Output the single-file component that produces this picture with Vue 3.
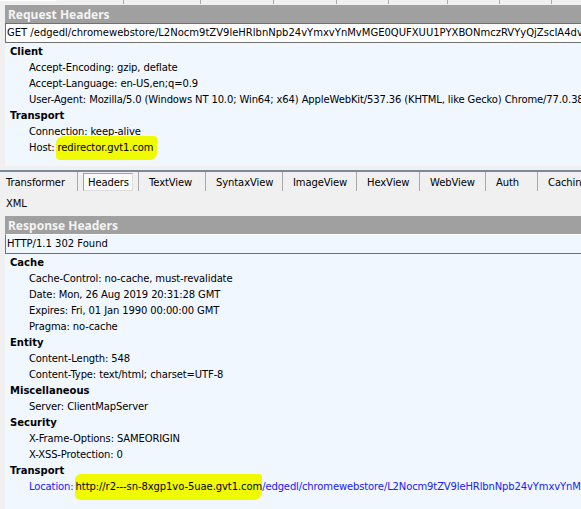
<script setup>
const topTabs = [57, 67, 77, 73, 63, 52, 59, 52, 52]

const tabs = [
  { name: 'Transformer', width: 78 },
  { name: 'Headers', width: 61 },
  { name: 'TextView', width: 67 },
  { name: 'SyntaxView', width: 77 },
  { name: 'ImageView', width: 74 },
  { name: 'HexView', width: 63 },
  { name: 'WebView', width: 66 },
  { name: 'Auth', width: 52 },
  { name: 'Caching', width: 60 }
]

const requestGroups = [
  {
    name: 'Client',
    rows: [
      'Accept-Encoding: gzip, deflate',
      'Accept-Language: en-US,en;q=0.9',
      'User-Agent: Mozilla/5.0 (Windows NT 10.0; Win64; x64) AppleWebKit/537.36 (KHTML, like Gecko) Chrome/77.0.38'
    ]
  },
  { name: 'Transport', rows: ['Connection: keep-alive'] }
]

const responseGroups = [
  {
    name: 'Cache',
    rows: [
      'Cache-Control: no-cache, must-revalidate',
      'Date: Mon, 26 Aug 2019 20:31:28 GMT',
      'Expires: Fri, 01 Jan 1990 00:00:00 GMT',
      'Pragma: no-cache'
    ]
  },
  { name: 'Entity', rows: ['Content-Length: 548', 'Content-Type: text/html; charset=UTF-8'] },
  { name: 'Miscellaneous', rows: ['Server: ClientMapServer'] },
  { name: 'Security', rows: ['X-Frame-Options: SAMEORIGIN', 'X-XSS-Protection: 0'] }
]
</script>

<template>
  <div class="inspector">
    <div class="top-tabs">
      <span v-for="(w, i) in topTabs" :key="i" class="top-tab" :style="{ width: w + 'px' }"></span>
    </div>

    <section class="pane pane--request">
      <h2 class="pane-title">Request Headers</h2>
      <div class="status-line">GET /edgedl/chromewebstore/L2Nocm9tZV9leHRlbnNpb24vYmxvYnMvMGE0QUFXUU1PYXBONmczRVYyQjZscIA4dv</div>
      <div class="tree">
        <template v-for="group in requestGroups" :key="group.name">
          <div class="group-name">{{ group.name }}</div>
          <div v-for="row in group.rows" :key="row" class="row">{{ row }}</div>
        </template>
        <div class="row">Host: <mark class="marker marker--host">redirector.gvt1.com</mark></div>
      </div>
    </section>

    <div class="splitter"></div>

    <nav class="tabs">
      <span
        v-for="tab in tabs"
        :key="tab.name"
        class="tab"
        :class="{ 'tab--active': tab.name === 'Headers' }"
        :style="{ width: tab.width + 'px' }"
      ><span class="tab-label">{{ tab.name }}</span></span>
    </nav>
    <nav class="tabs tabs--second">
      <span class="tab tab--xml">XML</span>
    </nav>

    <section class="pane pane--response">
      <h2 class="pane-title">Response Headers</h2>
      <div class="status-line">HTTP/1.1 302 Found</div>
      <div class="tree tree--response">
        <template v-for="group in responseGroups" :key="group.name">
          <div class="group-name">{{ group.name }}</div>
          <div v-for="row in group.rows" :key="row" class="row">{{ row }}</div>
        </template>
        <div class="group-name">Transport</div>
        <div class="row row--link">Location: <mark class="marker marker--location">http://r2---sn-8xgp1vo-5uae.gvt1.com</mark>/edgedl/chromewebstore/L2Nocm9tZV9leHRlbnNpb24vYmxvYnMvM</div>
      </div>
    </section>
  </div>
</template>

<style>
html,
body {
  margin: 0;
  background: #f0f0f0;
}
</style>

<style scoped>
.inspector {
  width: 581px;
  height: 509px;
  overflow: hidden;
  background: #f0f0f0;
  color: #000;
  font-family: "DejaVu Sans", sans-serif;
  font-size: 10px;
}

.top-tabs {
  display: flex;
  height: 5px;
}

.top-tab {
  flex: none;
  box-sizing: border-box;
  height: 4px;
  border-right: 1px solid #a8a8a8;
}

.top-tab:first-child {
  border-top: 1px solid #fff;
  border-right-color: transparent;
}

.pane {
  margin-left: 5px;
}

.pane-title {
  margin: 0;
  height: 18px;
  padding-left: 3px;
  background: #a0a0a0;
  color: #f4f4f4;
  font-family: "Noto Sans", sans-serif;
  font-size: 12px;
  font-weight: 700;
  line-height: 19px;
}

.status-line {
  box-sizing: border-box;
  height: 20px;
  padding-left: 1px;
  background: #fff;
  border-top: 1px solid #707070;
  border-bottom: 1px solid #707070;
  border-left: 1px solid #707070;
  line-height: 18px;
  white-space: nowrap;
  overflow: hidden;
}

.tree {
  box-sizing: border-box;
  height: 123px;
  padding-top: 1px;
  background: #f0f7ff;
}

.tree--response {
  height: 256px;
}

.pane--response .status-line {
  border-top-color: #fff;
  background: #f0f7ff;
}

.group-name,
.row {
  height: 16px;
  line-height: 16px;
  white-space: nowrap;
}

.group-name {
  padding-left: 5px;
  font-weight: 700;
}

.row {
  padding-left: 24px;
  letter-spacing: -0.13px;
}

.row--link {
  color: #2020f0;
}

.marker {
  display: inline-block;
  background: #f0fa00;
  color: inherit;
  vertical-align: top;
}

.marker--host {
  height: 24px;
  margin: -4px 0 -4px -2px;
  padding: 0 4px 0 2px;
  border-radius: 8px 3px 7px 4px;
  line-height: 24px;
}

.marker--location {
  height: 26px;
  margin: -5px 0 -5px -2px;
  padding: 0 0 0 1px;
  border-radius: 6px 3px 8px 5px;
  line-height: 26px;
  letter-spacing: -0.08px;
  color: #000;
}

.splitter {
  height: 2px;
  margin-top: 4px;
  background: #7a8a99;
}

.tabs {
  display: flex;
  height: 19px;
  align-items: flex-start;
  white-space: nowrap;
  letter-spacing: -0.1px;
}

.tab {
  flex: none;
  box-sizing: border-box;
  height: 19px;
  padding-left: 10px;
  border-right: 1px solid #a8a8a8;
  line-height: 21px;
}

.tab:first-child {
  padding-left: 6px;
}

.tab:last-child {
  border-right: 0;
}

.tab--active {
  padding-left: 5px;
}

.tab--active .tab-label {
  display: inline-block;
  box-sizing: border-box;
  width: 50px;
  height: 18px;
  padding-left: 4px;
  margin-top: 1px;
  background: #fafafa;
  border: 1px solid #a0a0a0;
  border-right-color: #ddd;
  border-bottom-color: #ddd;
  line-height: 18px;
}

.tabs--second {
  margin-top: 3px;
}

.tab--xml {
  width: 49px;
  line-height: 20px;
}

.pane--response {
  margin-top: 3px;
}
</style>
